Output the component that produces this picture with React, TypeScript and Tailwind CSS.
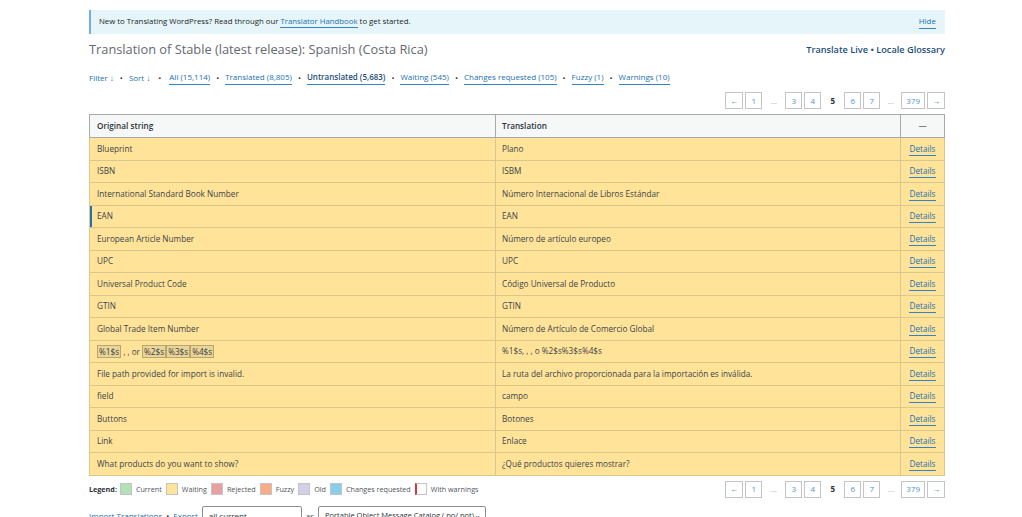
import React from "react";

const rows: { o: React.ReactNode; t: string; hl?: boolean }[] = [
  { o: "Blueprint", t: "Plano" },
  { o: "ISBN", t: "ISBM" },
  { o: "International Standard Book Number", t: "Número Internacional de Libros Estándar" },
  { o: "EAN", t: "EAN", hl: true },
  { o: "European Article Number", t: "Número de artículo europeo" },
  { o: "UPC", t: "UPC" },
  { o: "Universal Product Code", t: "Código Universal de Producto" },
  { o: "GTIN", t: "GTIN" },
  { o: "Global Trade Item Number", t: "Número de Artículo de Comercio Global" },
  { o: "PH", t: "%1$s, , , o %2$s%3$s%4$s" },
  { o: "File path provided for import is invalid.", t: "La ruta del archivo proporcionada para la importación es inválida." },
  { o: "field", t: "campo" },
  { o: "Buttons", t: "Botones" },
  { o: "Link", t: "Enlace" },
  { o: "What products do you want to show?", t: "¿Qué productos quieres mostrar?" },
];

const Ph = ({ children }: { children: React.ReactNode }) => (
  <span className="inline-block border border-[#b9a56e] bg-[#e8d59a] px-[1px] leading-[11px] text-[#3c3c3c]">{children}</span>
);

const Lk = ({ children, bold }: { children: React.ReactNode; bold?: boolean }) => (
  <a className={`border-b border-[#3582c4] pb-[1px] ${bold ? "text-[#1d4f7c] font-semibold" : "text-[#2271b1]"}`}>{children}</a>
);

const Dot = () => <span className="mx-[6px] text-[#2c3338]">•</span>;

const Pager = () => {
  const btn = "flex h-[17px] min-w-[17px] items-center justify-center border border-[#c3c4c7] bg-white px-[4px] text-[#4f94d4]";
  return (
    <div className="flex items-center justify-end gap-[2px] text-[8px]">
      <span className={`${btn} text-[#2271b1]`}>←</span>
      <span className={btn}>1</span>
      <span className="w-[19px] text-center text-[#a7aaad]">…</span>
      <span className={btn}>3</span>
      <span className={btn}>4</span>
      <span className="w-[19px] text-center font-bold text-[#2c3338]">5</span>
      <span className={btn}>6</span>
      <span className={btn}>7</span>
      <span className="w-[17px] text-center text-[#a7aaad]">…</span>
      <span className={btn}>379</span>
      <span className={`${btn} text-[#2271b1]`}>→</span>
    </div>
  );
};

const Sw = ({ c, label, warn }: { c: string; label: string; warn?: boolean }) => (
  <span className="flex items-center">
    <span className={`mr-[4px] inline-block h-[12px] w-[12px] border ${warn ? "border-[#c3c4c7] border-l-[2px] border-l-[#d63638]" : "border-[#c3c4c7]"}`} style={{ background: c }} />
    <span className="mr-[4px] text-[#50575e]">{label}</span>
  </span>
);

export default function App() {
  return (
    <div className="min-h-[517px] bg-white pt-[10px]" style={{ fontFamily: '"Open Sans", "Noto Sans", sans-serif' }}>
      <div className="ml-[89px] w-[856px] text-[8px] text-[#1e1e1e]">
        <div className="flex h-[24px] items-center justify-between border-l-[2px] border-[#72aee6] bg-[#e5f5fa] pl-[8px] pr-[9px]">
          <span className="text-[7.8px]">
            New to Translating WordPress? Read through our <Lk>Translator Handbook</Lk> to get started.
          </span>
          <Lk>Hide</Lk>
        </div>
        <div className="mt-[6px] flex items-center justify-between">
          <h2 className="text-[12.8px] text-[#646970]">Translation of Stable (latest release): Spanish (Costa Rica)</h2>
          <div className="text-[9.2px] font-semibold text-[#1d4f7c]">
            <a>Translate Live</a> • <a>Locale Glossary</a>
          </div>
        </div>
        <div className="mt-[12px] flex items-center text-[8px] text-[#2271b1]">
          <span>Filter ↓</span>
          <Dot />
          <span>Sort ↓</span>
          <span className="mx-[8px] text-[#2c3338]">•</span>
          <Lk>All (15,114)</Lk>
          <Dot />
          <Lk>Translated (8,805)</Lk>
          <Dot />
          <Lk bold>Untranslated (5,683)</Lk>
          <Dot />
          <Lk>Waiting (545)</Lk>
          <Dot />
          <Lk>Changes requested (105)</Lk>
          <Dot />
          <Lk>Fuzzy (1)</Lk>
          <Dot />
          <Lk>Warnings (10)</Lk>
        </div>
        <div className="mt-[7px]">
          <Pager />
        </div>
        <table className="mt-[5px] w-full border-collapse border border-[#a7aaad] text-[8.2px]">
          <thead>
            <tr className="h-[23px] bg-[#f6f7f7] text-left font-semibold text-[#2c3338]">
              <th className="w-[406px] border border-[#a7aaad] px-[7px] font-semibold">Original string</th>
              <th className="w-[405px] border border-[#a7aaad] px-[6px] font-semibold">Translation</th>
              <th className="border border-[#a7aaad] text-center font-normal text-[#50575e]">—</th>
            </tr>
          </thead>
          <tbody>
            {rows.map((r, i) => (
              <tr key={i} className="h-[22.5px] bg-[#ffe399] text-[#3c434a]">
                <td className={`border border-[#d9c78e] px-[7px] ${r.hl ? "shadow-[inset_2px_0_0_#2271b1]" : ""}`}>
                  {r.o === "PH" ? (
                    <span>
                      <Ph>%1$s</Ph> , , or <Ph>%2$s</Ph><Ph>%3$s</Ph><Ph>%4$s</Ph>
                    </span>
                  ) : (
                    r.o
                  )}
                </td>
                <td className="border border-[#d9c78e] px-[6px]">{r.t}</td>
                <td className="border border-[#d9c78e] text-center">
                  <Lk>Details</Lk>
                </td>
              </tr>
            ))}
          </tbody>
        </table>
        <div className="mt-[5px] flex items-center justify-between">
          <div className="flex items-center text-[7.2px]">
            <span className="mr-[3px] font-bold text-[#2c3338]">Legend:</span>
            <Sw c="#b5e1b9" label="Current" />
            <Sw c="#ffe399" label="Waiting" />
            <Sw c="#e9a0a0" label="Rejected" />
            <Sw c="#f9ab86" label="Fuzzy" />
            <Sw c="#d4cfe8" label="Old" />
            <Sw c="#87ceeb" label="Changes requested" />
            <Sw c="#ffffff" label="With warnings" warn />
          </div>
          <Pager />
        </div>
        <div className="mt-[8px] flex items-center whitespace-nowrap text-[8px] text-[#2271b1]">
          <a>Import Translations</a>
          <span className="mx-[4px] text-[#2c3338]">•</span>
          <a>Export</a>
          <span className="ml-[4px] flex h-[20px] w-[100px] items-center justify-between rounded-[2px] border border-[#8c8f94] px-[6px] text-[#2c3338]">
            all current <span>⌄</span>
          </span>
          <span className="mx-[4px] text-[#50575e]">as</span>
          <span className="flex h-[20px] w-[168px] items-center justify-between rounded-[2px] border border-[#8c8f94] px-[6px] text-[7.5px] text-[#2c3338]">
            Portable Object Message Catalog (.po/.pot) <span>⌄</span>
          </span>
        </div>
      </div>
    </div>
  );
}
